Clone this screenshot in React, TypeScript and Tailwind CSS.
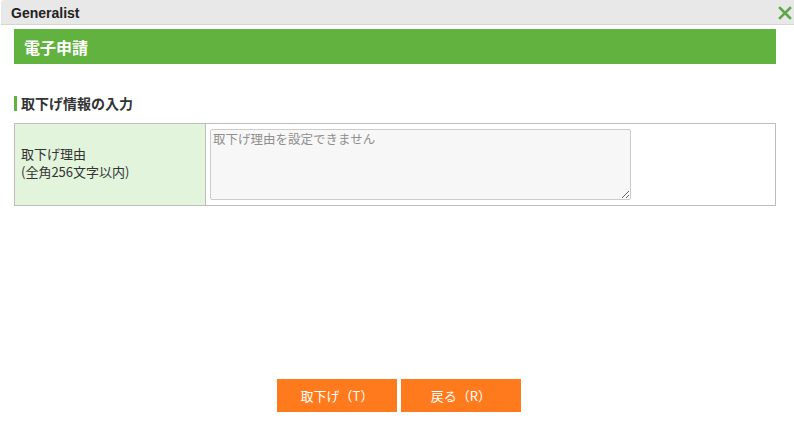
export default function App() {
  return (
    <div className="w-[794px] h-[423px] bg-white flex flex-col overflow-hidden">
      {/* Dialog title bar */}
      <div className="ml-px h-[25px] bg-[#e8e8e8] border-b border-[#d6d6d6] rounded-tl-[3px] flex items-center justify-between pl-[10px] pr-[2px]">
        <span className="pt-[2px] text-[14px] font-bold text-[#222] font-['Liberation_Sans',Arial,sans-serif]">Generalist</span>
        <svg width="14" height="14" viewBox="0 0 14 14" className="mt-[2px]">
          <path d="M2 2 L12 12 M12 2 L2 12" stroke="#5fa847" strokeWidth="2.6" strokeLinecap="square" />
        </svg>
      </div>

      <div className="flex-1 flex flex-col pl-[14px] pr-[18px] font-['Noto_Sans_CJK_JP','Noto_Sans',sans-serif]">
        <div className="mt-[4px] h-[35px] bg-[#62b23f] flex items-center pl-[10px]">
          <h1 className="text-[16px] font-bold text-white">電子申請</h1>
        </div>

        <div className="mt-[32px] flex items-center">
          <span className="w-[3px] h-[15px] bg-[#62b23f]" />
          <h2 className="ml-[4px] text-[14px] font-bold text-[#333] leading-[15px]">取下げ情報の入力</h2>
        </div>

        <div className="mt-[12px] h-[83px] border border-[#bdbdbd] flex">
          <div className="w-[191px] bg-[#e2f5dc] border-r border-[#bdbdbd] flex flex-col justify-center px-[6px] pb-[4px] text-[13px] leading-[18px] text-[#333]">
            <span>取下げ理由</span>
            <span>(全角256文字以内)</span>
          </div>
          <div className="flex-1 pl-[4px] pt-[5px]">
            <textarea
              disabled
              placeholder="取下げ理由を設定できません"
              className="w-[421px] h-[71px] bg-[#f7f7f7] border border-[#cccccc] rounded-[2px] px-[2px] py-0 text-[12.5px] leading-[17px] text-[#888] placeholder:text-[#8f8f8f] resize"
            />
          </div>
        </div>

        <div className="flex-1" />

        <div className="flex justify-center gap-[4px] pl-[8px] mb-[11px]">
          <button className="w-[120px] h-[33px] bg-[#ff7a1c] text-white text-[13px]">取下げ（T）</button>
          <button className="w-[120px] h-[33px] bg-[#ff7a1c] text-white text-[13px]">戻る（R）</button>
        </div>
      </div>
    </div>
  );
}
